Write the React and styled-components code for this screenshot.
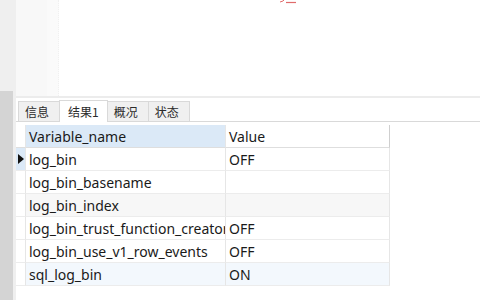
import React from 'react';
import styled, { createGlobalStyle } from 'styled-components';

const GlobalStyle = createGlobalStyle`
  html, body {
    margin: 0;
    padding: 0;
    background: #fff;
  }
  body {
    width: 480px;
    height: 300px;
    overflow: hidden;
    font-family: 'Noto Sans', 'Noto Sans CJK SC', sans-serif;
  }
`;

const rows = [
  { name: 'log_bin', value: 'OFF', current: true },
  { name: 'log_bin_basename', value: '' },
  { name: 'log_bin_index', value: '', tone: 'grey' },
  { name: 'log_bin_trust_function_creators', value: 'OFF' },
  { name: 'log_bin_use_v1_row_events', value: 'OFF' },
  { name: 'sql_log_bin', value: 'ON', tone: 'blue' },
];

const tabs = ['信息', '结果1', '概况', '状态'];

const Page = styled.div`
  display: flex;
  width: 480px;
  height: 300px;
`;

const SideStrip = styled.div`
  width: 13px;
  display: flex;
  flex-direction: column;
  flex-shrink: 0;
`;

const StripTop = styled.div`
  height: 91px;
  background: #efefef;
`;

const StripBottom = styled.div`
  flex: 1;
  background: #d4d4d4;
`;

const Gap = styled.div`
  width: 3px;
  background: #efefef;
  flex-shrink: 0;
`;

const Main = styled.div`
  flex: 1;
  display: flex;
  flex-direction: column;
  min-width: 0;
`;

const Editor = styled.div`
  height: 96px;
  display: flex;
  border-bottom: 2px solid #ececec;
`;

const Gutter = styled.div`
  width: 31px;
  background: #f8f8f8;
`;

const Fold = styled.div`
  width: 11px;
  background: #fafafa;
  border-right: 1px dotted #f0f0f0;
`;

const Code = styled.div`
  flex: 1;
  position: relative;
  background: #fff;
`;

const Squiggle = styled.svg`
  position: absolute;
  left: 221px;
  top: 0;
`;

const TabBar = styled.div`
  display: flex;
  align-items: flex-end;
  height: 23px;
  padding-left: 2px;
  border-bottom: 1px solid #d9d9d9;
`;

const Tab = styled.div`
  height: ${(p) => (p.$active ? '22px' : '20px')};
  padding: 0 ${(p) => (p.$active ? '8px' : '6px')};
  display: flex;
  align-items: center;
  box-sizing: border-box;
  background: ${(p) => (p.$active ? '#ffffff' : '#f0f0f0')};
  border: 1px solid #d9d9d9;
  border-bottom: none;
  margin-right: -1px;
  margin-bottom: ${(p) => (p.$active ? '-1px' : '0')};
  font-family: 'Noto Sans CJK SC', sans-serif;
  font-size: 12px;
  color: #2b2b2b;
  min-width: ${(p) => (p.$active ? '46px' : '42px')};
`;

const Grid = styled.div`
  margin-top: 3px;
  display: grid;
  grid-template-columns: 10px 200px 164px;
  width: 374px;
  font-size: 14px;
  color: #1a1a1a;
`;

const Cell = styled.div`
  height: 23px;
  box-sizing: border-box;
  display: flex;
  align-items: center;
  padding-left: 3px;
  overflow: hidden;
  white-space: nowrap;
  border-right: 1px solid #e6e6e6;
  border-bottom: 1px solid #ececec;
  background: ${(p) =>
    p.$tone === 'grey' ? '#f7f7f7' : p.$tone === 'blue' ? '#f3f8fd' : '#ffffff'};
`;

const HeadCell = styled(Cell)`
  background: ${(p) => (p.$selected ? '#dbe9f7' : '#ffffff')};
  border-bottom: 1px solid #dedede;
  border-right: 1px solid ${(p) => (p.$last ? '#cfcfcf' : '#e6e6e6')};
`;

const Indicator = styled.div`
  height: 23px;
  box-sizing: border-box;
  display: flex;
  align-items: center;
  justify-content: center;
  border-right: 1px solid #e6e6e6;
  border-bottom: 1px solid #ececec;
  background: ${(p) => (p.$current ? '#dbe9f7' : '#ffffff')};
`;

export default function App() {
  return (
    <>
      <GlobalStyle />
      <Page>
        <SideStrip>
          <StripTop />
          <StripBottom />
        </SideStrip>
        <Gap />
        <Main>
          <Editor>
            <Gutter />
            <Fold />
            <Code>
              <Squiggle width="40" height="6" viewBox="0 0 40 6">
                <path d="M0 2 L3 1 L4 0" stroke="#e06b6b" strokeWidth="1" fill="none" />
                <path d="M6 2.5 L16 2.5" stroke="#e06b6b" strokeWidth="1.2" fill="none" />
              </Squiggle>
            </Code>
          </Editor>
          <TabBar>
            {tabs.map((t, i) => (
              <Tab key={t} $active={i === 1}>
                {t}
              </Tab>
            ))}
          </TabBar>
          <Grid>
            <HeadCell />
            <HeadCell $selected>Variable_name</HeadCell>
            <HeadCell $last>Value</HeadCell>
            {rows.map((r) => (
              <React.Fragment key={r.name}>
                <Indicator $current={r.current}>
                  {r.current && (
                    <svg width="6" height="10" viewBox="0 0 6 10">
                      <path d="M0 0 L6 5 L0 10 Z" fill="#111" />
                    </svg>
                  )}
                </Indicator>
                <Cell $tone={r.tone}>{r.name}</Cell>
                <Cell $tone={r.tone}>{r.value}</Cell>
              </React.Fragment>
            ))}
          </Grid>
        </Main>
      </Page>
    </>
  );
}
